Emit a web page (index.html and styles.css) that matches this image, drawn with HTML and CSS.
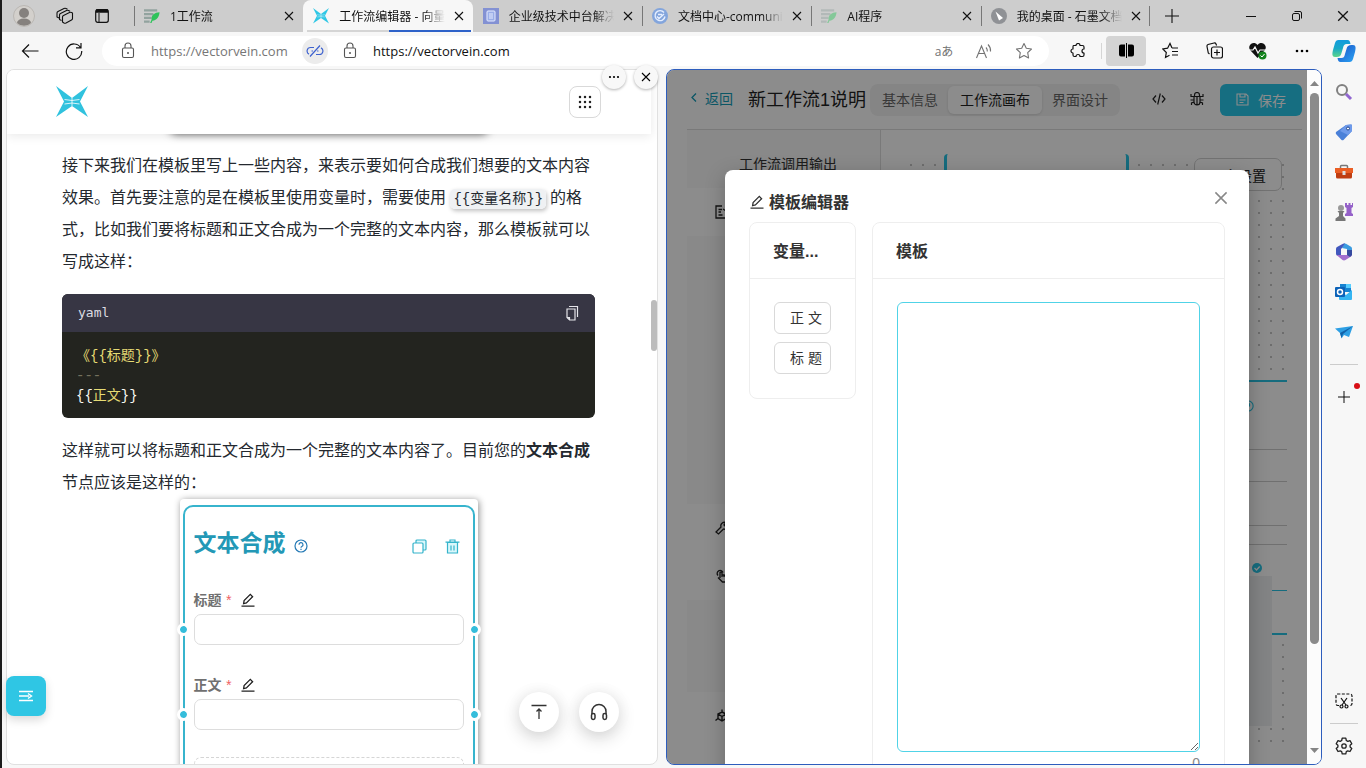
FILE: index.html
```html
<!DOCTYPE html>
<html lang="zh-CN">
<head>
<meta charset="utf-8">
<meta name="viewport" content="width=device-width, initial-scale=1">
<title>工作流编辑器 - 向量脉络</title>
<link rel="stylesheet" href="styles.css">
</head>
<body>
<svg class="defs" aria-hidden="true">
  <defs>
    <symbol id="x" viewBox="0 0 10 10"><path d="M1 1l8 8M9 1l-8 8" fill="none" stroke="currentColor" stroke-width="1.1"/></symbol>
    <symbol id="edit" viewBox="0 0 14 14"><path d="M2.6 10.6l.5-3 6.2-6.2 2.3 2.3-6.2 6.3zM.5 13.2h13" fill="none" stroke="currentColor" stroke-width="1.3"/></symbol>
    <symbol id="lock" viewBox="0 0 14 18"><rect x="1.5" y="6" width="11" height="9.5" rx="1.5" fill="none" stroke="currentColor" stroke-width="1.1"/><path d="M4 6V4a3 3 0 0 1 6 0v2" fill="none" stroke="currentColor" stroke-width="1.1"/><circle cx="7" cy="11" r="1" fill="currentColor"/></symbol>
    <symbol id="bird" viewBox="0 0 32 32"><path d="M0 0l16 12v8L0 31l8-15.500zM32 0L16 12v8l16 11-8-15.500z" fill="currentColor"/><path d="M8.500 13.500l7.500 1 7.500-1M8.500 18l7.500-1 7.500 1M16 12v8" fill="none" stroke="#fff" stroke-width=".8"/></symbol>
    <symbol id="leaf" viewBox="0 0 17 16"><path d="M0 2h14M0 6h10M0 10h8M0 14h6" stroke="#92a39f" stroke-width="2.200"/><path d="M16.500 4c-5 0-9 3-8.500 8l-1.500 3.500h1.500l1-2.500c5-.5 7-4 7.500-9z" fill="#2fc35b"/></symbol>
    <symbol id="star" viewBox="0 0 18 18"><path d="M9 1.500l2.300 4.800 5.200.7-3.800 3.700.9 5.300L9 13.500 4.400 16l.9-5.300L1.500 7l5.200-.7z" fill="none" stroke="currentColor" stroke-width="1.1" stroke-linejoin="round"/></symbol>
    <symbol id="plus" viewBox="0 0 14 14"><path d="M7 0v14M0 7h14" stroke="currentColor" stroke-width="1.100"/></symbol>
  </defs>
</svg>

<div class="window">
  <header class="tabbar">
    <div class="tab-tools">
      <button class="icon-btn" aria-label="用户"><svg width="22" height="22" viewBox="0 0 22 22"><circle cx="11" cy="11" r="10.500" fill="#d3d0cc" stroke="#bab7b3"/><circle cx="11" cy="8" r="5" fill="#85817e"/><path d="M4 18a7 4.500 0 0 1 14 0 10 10 0 0 1-14 0z" fill="#85817e"/></svg></button>
      <button class="icon-btn" aria-label="工作区"><svg width="18" height="18" viewBox="0 0 18 18" fill="#cdcdcd" stroke="#111" stroke-width="1.100" stroke-linejoin="round"><path d="M3 11l-2-1V6q0-1 1-1.500l6-3q1-.5 2 0l1.500.8"/><path d="M5.500 13.500l-2-1V8q0-1 1-1.500l6-3q1-.5 2 0l1.500.8"/><path d="M6.500 10q0-1 1-1.500l6-3q1-.4 2 0l1 .5v5.500q0 1-1 1.500l-5.500 3q-1 .4-2 0l-1.500-1z"/></svg></button>
      <button class="icon-btn" aria-label="标签页操作"><svg width="14" height="14" viewBox="0 0 14 14"><rect x=".7" y=".7" width="12.600" height="12.600" rx="2" fill="none" stroke="#111" stroke-width="1.200"/><path d="M1 2.500h12M1 1.500h12" stroke="#111" stroke-width="2.500"/><path d="M4 4v9" stroke="#111"/></svg></button>
    </div>
    <nav class="tabs">
      <div class="tab ruled"><svg class="fav"><use href="#leaf"/></svg><button class="tab-title">1工作流</button><button class="tab-x" aria-label="关闭"><svg><use href="#x"/></svg></button></div>
      <div class="tab active"><svg class="fav cyan"><use href="#bird"/></svg><button class="tab-title">工作流编辑器 - 向量脉络</button><button class="tab-x" aria-label="关闭"><svg><use href="#x"/></svg></button></div>
      <div class="tab"><svg class="fav" viewBox="0 0 16 16"><path d="M0 0h16v16H0z" fill="#8391d3"/><rect x="4" y="3" width="8" height="10" rx="1" fill="#9baee8" stroke="#e7ecff"/><path d="M6 6h4M6 8h4M6 10h4" stroke="#e7ecff"/></svg><button class="tab-title">企业级技术中台解决方案</button><button class="tab-x" aria-label="关闭"><svg><use href="#x"/></svg></button></div>
      <div class="tab ruled"><svg class="fav" viewBox="0 0 16 16"><circle cx="8" cy="8" r="8" fill="#83a5dc"/><path d="M12 4.500a5 5 0 1 0 1 4M5 8.500l2 2L12 6M6 6.500h4" fill="none" stroke="#e6efff" stroke-width="1.400"/></svg><button class="tab-title">文档中心-community</button><button class="tab-x" aria-label="关闭"><svg><use href="#x"/></svg></button></div>
      <div class="tab ruled"><svg class="fav faded"><use href="#leaf"/></svg><button class="tab-title">AI程序</button><button class="tab-x" aria-label="关闭"><svg><use href="#x"/></svg></button></div>
      <div class="tab ruled"><svg class="fav" viewBox="0 0 16 16"><circle cx="8" cy="8" r="8" fill="#8f9195"/><path d="M4.500 3.500l7.500 6.500-4 2.500z" fill="#fff"/></svg><button class="tab-title">我的桌面 - 石墨文档</button><button class="tab-x" aria-label="关闭"><svg><use href="#x"/></svg></button></div>
    </nav>
    <button class="icon-btn new-tab" aria-label="新标签页"><svg width="14" height="14"><use href="#plus"/></svg></button>
    <div class="win-btns">
      <button class="icon-btn" aria-label="最小化"><svg width="10" height="10"><path d="M0 5.500h10" stroke="#111"/></svg></button>
      <button class="icon-btn" aria-label="还原"><svg width="10" height="10" viewBox="0 0 10 10" fill="none" stroke="#111"><rect x=".5" y="2.500" width="7" height="7" rx="1.500"/><path d="M2.500.5H8A1.500 1.500 0 0 1 9.500 2v5.500"/></svg></button>
      <button class="icon-btn" aria-label="关闭窗口"><svg width="12" height="12"><use href="#x"/></svg></button>
    </div>
  </header>

  <div class="toolbar">
    <button class="icon-btn" aria-label="后退"><svg width="18" height="16" viewBox="0 0 18 16" fill="none" stroke="#111" stroke-width="1.200"><path d="M1.500 8h16M8 1.500L1.500 8 8 14.500"/></svg></button>
    <button class="icon-btn" aria-label="刷新"><svg width="18" height="18" viewBox="0 0 18 18" fill="none" stroke="#111" stroke-width="1.200"><path d="M15.500 5.500A7.700 7.700 0 1 0 16.700 9M16 1v4.800h-5"/></svg></button>
    <div class="urlbar">
      <svg class="lock"><use href="#lock"/></svg>
      <input class="url muted" aria-label="左侧地址" value="https://vectorvein.com">
      <button class="unlink" aria-label="取消链接"><svg width="18" height="14" viewBox="0 0 18 14" fill="none" stroke="#3e62cf" stroke-width="1.200"><path d="M8 3.500H4.500a3.500 3.500 0 0 0-1.500 6.600M10 10.500h3.500a3.500 3.500 0 0 0 1.500-6.600M4 12.500L14 1.500M5.500 7h1.500M11 7h1.500"/></svg></button>
      <svg class="lock"><use href="#lock"/></svg>
      <input class="url" aria-label="右侧地址" value="https://vectorvein.com">
      <span class="grow"></span>
      <button class="icon-btn gray translate" aria-label="翻译">aあ</button>
      <button class="icon-btn gray" aria-label="朗读"><svg width="18" height="16" viewBox="0 0 18 16" fill="none" stroke="currentColor" stroke-width="1.100"><path d="M1.500 15L6.500 3l5 12M3.500 10.500h6M11 4.500q1.500 1.500 1.300 4M13 1.500q3 3 2.500 7"/></svg></button>
      <button class="icon-btn gray" aria-label="收藏"><svg width="18" height="18"><use href="#star"/></svg></button>
    </div>
    <div class="actions">
      <button class="icon-btn ext" aria-label="扩展"><svg width="16" height="16" viewBox="0 0 16 16" fill="none" stroke="#111" stroke-width="1.200" stroke-linejoin="round"><path d="M3.500 2.500H6a2 2 0 0 1 4 0h2.500q1.500 0 1.500 1.500v2a2 2 0 0 0 0 4v2q0 1.500-1.500 1.500H10a2 2 0 0 0-4 0H4.500Q3 13.500 3 12v-2a2 2 0 1 1 0-4V4q0-1.500.5-1.500z"/></svg></button>
      <button class="icon-btn split" aria-label="分屏"><svg width="15" height="15" viewBox="0 0 15 15"><path d="M2 1.500h4v12H2a2 2 0 0 1-2-2v-8a2 2 0 0 1 2-2zM9 1.500h4a2 2 0 0 1 2 2v8a2 2 0 0 1-2 2H9zM7 0h1v15H7z"/></svg></button>
      <button class="icon-btn" aria-label="收藏夹"><svg width="17" height="17" viewBox="0 0 17 17" fill="none" stroke="#111" stroke-width="1.200"><path d="M10 6L8 1.500 5.600 6.200.8 7l3.500 3.500-.8 5 4-2.200M10 6h6M10 9.500h6M10 13h6"/></svg></button>
      <button class="icon-btn" aria-label="集锦"><svg width="17" height="17" viewBox="0 0 17 17" fill="none" stroke="#111" stroke-width="1.200"><path d="M3.500 12L2.300 11 1 4.500q-.3-1.500 1-2L8 1q1.500-.3 2 1l.6 1.500"/><rect x="5.500" y="5" width="11" height="11" rx="2"/><path d="M11 7.500v6M8 10.500h6"/></svg></button>
      <button class="icon-btn" aria-label="浏览器概要"><svg width="18" height="18" viewBox="0 0 18 18"><path d="M8.500 16L1 8a4.200 4.200 0 0 1 7.500-5A4.200 4.200 0 0 1 16 8z" fill="#111"/><path d="M0 8h4l2-3 3 6 2-3h6" stroke="#f7f7f7" stroke-width="1.200" fill="none"/><circle cx="13.500" cy="13.500" r="4" fill="#13831d"/><path d="M11.500 13.500l1.500 1.500 2.500-3" stroke="#fff" fill="none"/></svg></button>
      <button class="icon-btn" aria-label="更多"><svg width="14" height="4"><circle cx="2" cy="2" r="1.300"/><circle cx="7" cy="2" r="1.300"/><circle cx="12" cy="2" r="1.300"/></svg></button>
      <button class="icon-btn" aria-label="Copilot"><svg width="24" height="24" viewBox="0 0 24 24"><defs><linearGradient id="g1" x2="0" y2="1"><stop stop-color="#129bde"/><stop offset=".5" stop-color="#19a9c7"/><stop offset="1" stop-color="#5cd68b"/></linearGradient><linearGradient id="g2" y2="1"><stop stop-color="#1c4fc6"/><stop offset="1" stop-color="#2aa5f4"/></linearGradient></defs><path d="M6.500 1h9c2 0 2.500 1.500 3 4h-4c-2 0-2.800 1-3.500 4l-1.500 5c-.8 3-2 4-5 4H3C0 18 0 15 1 11l2-7c.7-2 1.500-3 3.500-3z" fill="url(#g1)"/><path d="M17.500 23h-9c-2 0-2.500-1.500-3-4h4c2 0 2.800-1 3.500-4l1.500-5c.8-3 2-4 5-4H21c3 0 3 3 2 7l-2 7c-.7 2-1.500 3-3.500 3z" fill="url(#g2)"/></svg></button>
    </div>
  </div>

  <div class="workspace">
    <section class="pane left">
      <div class="pane-tools">
        <button aria-label="更多选项"><svg width="12" height="4"><circle cx="2" cy="2" r="1.100"/><circle cx="6" cy="2" r="1.100"/><circle cx="10" cy="2" r="1.100"/></svg></button>
        <button aria-label="关闭分屏"><svg width="10" height="10"><use href="#x"/></svg></button>
      </div>
      <div class="doc">
        <header class="doc-head">
          <svg class="logo"><use href="#bird"/></svg>
          <button class="grid-btn" aria-label="菜单"><svg width="14" height="14" viewBox="0 0 14 14"><path d="M2 2h.01M7 2h.01M12 2h.01M2 7h.01M7 7h.01M12 7h.01M2 12h.01M7 12h.01M12 12h.01" stroke="#222" stroke-width="2.500" stroke-linecap="round"/></svg></button>
        </header>
        <article class="article">
          <div class="prev-figure"></div>
          <p>接下来我们在模板里写上一些内容，来表示要如何合成我们想要的文本内容效果。首先要注意的是在模板里使用变量时，需要使用 <code>{{变量名称}}</code>的格式，比如我们要将标题和正文合成为一个完整的文本内容，那么模板就可以写成这样：</p>
          <div class="code">
            <div class="code-head"><span>yaml</span><button class="icon-btn copy" aria-label="复制"><svg width="14" height="16" viewBox="0 0 14 16" fill="none" stroke="#e5e5ea" stroke-width="1.200"><path d="M4 1.500h8.500v10.500"/><path d="M2 4h8v11H4.500L2 12.500zM2 12.500h2.500V15"/></svg></button></div>
            <pre><span class="y">《{{标题}}》</span>
<span class="c">---</span>
{{<span class="y">正文</span>}}</pre>
          </div>
          <p>这样就可以将标题和正文合成为一个完整的文本内容了。目前您的<b>文本合成</b>节点应该是这样的：</p>
          <figure class="figure">
            <div class="node">
              <div class="node-head"><h3>文本合成</h3><svg width="14" height="14" viewBox="0 0 14 14" fill="none" stroke="#2479b5" stroke-width="1.200"><circle cx="7" cy="7" r="6"/><path d="M5 5.800a2 2 0 1 1 2.800 1.700Q7 7.900 7 8.700M7 9.800v1.200"/></svg><span class="grow"></span><svg width="15" height="15" viewBox="0 0 15 15" fill="#d9f7fb" stroke="#35b4cb" stroke-width="1.200"><rect x="4" y="1" width="10" height="10" rx="1"/><rect x="1" y="4" width="10" height="10" rx="1" fill="#fff"/></svg><svg width="15" height="15" viewBox="0 0 15 15" fill="none" stroke="#35b4cb" stroke-width="1.200"><path d="M2.500 3.500h10V14h-10z" fill="#d9f7fb"/><path d="M.5 3.200h14M5 3V1h5v2M6 6.500v5M9 6.500v5"/></svg></div>
              <div class="field"><label for="f1">标题 <i>*</i><svg width="14" height="14"><use href="#edit"/></svg></label><div class="port"><input id="f1"></div></div>
              <div class="field"><label for="f2">正文 <i>*</i><svg width="14" height="14"><use href="#edit"/></svg></label><div class="port"><input id="f2"></div></div>
              <div class="dashed"></div>
            </div>
          </figure>
        </article>
      </div>
      <div class="thin-thumb"></div>
      <button class="side-fab" aria-label="展开目录"><svg width="14" height="12" viewBox="0 0 14 12" fill="none" stroke="#fff" stroke-width="1.400"><path d="M0 1.500h14M0 6h10M0 10.500h14M9 3.500L12.500 6 9 8.500"/></svg></button>
      <div class="fabs">
        <button aria-label="回到顶部"><svg width="16" height="16" viewBox="0 0 16 16" fill="none" stroke="#333" stroke-width="1.300"><path d="M.5 1.500h15M8 15V6M5.500 7.500L8 5l2.500 2.500"/></svg></button>
        <button aria-label="客服"><svg width="18" height="18" viewBox="0 0 18 18" fill="none" stroke="#333" stroke-width="1.500"><path d="M2 11V8.500a7 7 0 0 1 14 0V11"/><rect x="1.500" y="10.500" width="3.500" height="6" rx="1.700"/><rect x="13" y="10.500" width="3.500" height="6" rx="1.700"/></svg></button>
      </div>
    </section>

    <section class="pane right">
      <div class="app">
        <header class="app-head">
          <a href="#back" class="back"><svg width="6" height="9" viewBox="0 0 6 9"><path d="M5 .5L1 4.500l4 4" fill="none" stroke="currentColor" stroke-width="1.300"/></svg>返回</a>
          <h1>新工作流1说明</h1>
          <div class="segmented"><button>基本信息</button><button class="on">工作流画布</button><button>界面设计</button></div>
          <span class="grow"></span>
          <button class="icon-btn" aria-label="代码"><svg width="14" height="14" viewBox="0 0 14 14" fill="none" stroke="#222" stroke-width="1.200"><path d="M4 3.500L1 7l3 3.500M10 3.500L13 7l-3 3.500M8.300 1.500L5.700 12.500"/></svg></button>
          <button class="icon-btn" aria-label="调试"><svg width="14" height="14" viewBox="0 0 14 14" fill="none" stroke="#222" stroke-width="1.200"><path d="M4 4.500h6V10a3 3 0 0 1-6 0zM4.500 4V3a2.500 2.500 0 0 1 5 0v1M7 5v8M1 2v2.500h12V2M.5 8H4M10 8h3.500M1.500 13v-2L4 10M12.500 13v-2L10 10"/></svg></button>
          <button class="save"><svg width="13" height="13" viewBox="0 0 13 13" fill="none" stroke="#fff" stroke-width="1.100"><path d="M1 1h9l2 2v9H1zM4 1v3h5V1M3.500 7h6M3.500 9.500h4"/></svg>保存</button>
        </header>
        <div class="app-body">
          <aside class="nodes">
            <div class="group first">工作流调用输出</div>
            <div class="item"><svg width="14" height="14" viewBox="0 0 14 14"><path d="M7 1H1v12h12V8M3.500 4.500H7M3.500 7H6M3.500 10h4M8 4l3 2" fill="none" stroke="#222" stroke-width="1.300"/></svg></div>
            <div class="group tall"></div>
            <div class="item"><svg width="14" height="14" viewBox="0 0 14 14"><path d="M1 11l5-5c-1-3 2-5.500 5-4.500L9 4l1.500 1.500L13 3.500c1 3-2 5.500-4.500 4.500l-5 5z" fill="none" stroke="#222" stroke-width="1.300"/></svg></div>
            <div class="item"><svg width="14" height="14" viewBox="0 0 14 14"><path d="M3 6.500a3 3 0 1 1 5-3M5 9V3.500q1-1 2 0V8M7 6h2v2M9 6.500h2V8M11 7h2v3a3 3 0 0 1-3 3H7.500L3 8.500" fill="none" stroke="#222" stroke-width="1.300"/></svg></div>
            <div class="group mid"></div>
            <div class="item"><svg width="14" height="14" viewBox="0 0 14 14"><path d="M7 3l4 2v4.500L7 12 3 9.500V5zM3 5l4 2.500L11 5M7 7.500V12M7 3V.5M3 9.500L.5 11.500M11 9.500l2.500 2" fill="none" stroke="#222" stroke-width="1.400"/></svg></div>
          </aside>
          <div class="canvas">
            <div class="cnode top"></div>
            <button class="more-set">更多设置</button>
            <div class="cnode main"><svg class="q" width="12" height="12" viewBox="0 0 14 14" fill="none" stroke="#28c5e5" stroke-width="1.300"><circle cx="7" cy="7" r="6"/><path d="M5 5.800a2 2 0 1 1 2.800 1.700Q7 7.900 7 8.700"/></svg>
              <hr class="l1"><hr class="l2"><hr class="l3"><hr class="l4"><hr class="l5">
              <svg class="ok" width="10" height="10" viewBox="0 0 10 10"><circle cx="5" cy="5" r="5" fill="#28c5e5"/><path d="M2.500 5l2 2 3.200-3.500" fill="none" stroke="#fff" stroke-width="1.300"/></svg>
            </div>
            <div class="minimap"></div>
          </div>
        </div>
        <div class="mask"></div>
        <div class="modal" role="dialog" aria-labelledby="mt">
          <div class="modal-head"><svg width="14" height="14"><use href="#edit"/></svg><h2 id="mt">模板编辑器</h2><button class="icon-btn close" aria-label="关闭"><svg width="14" height="14"><use href="#x"/></svg></button></div>
          <div class="cards">
            <div class="card vars"><h4>变量...</h4><div class="card-body"><button>正 文</button><button>标 题</button></div></div>
            <div class="card tpl"><h4><label for="tpl">模板</label></h4><div class="card-body"><textarea id="tpl"></textarea><span class="count">0</span></div></div>
          </div>
        </div>
      </div>
      <div class="scroll"><svg width="9" height="5"><path d="M0 5l4.500-5L9 5z" fill="#858585"/></svg><div class="track"><div class="thumb"></div></div><svg width="9" height="5"><path d="M0 0l4.500 5L9 0z" fill="#858585"/></svg></div>
    </section>

    <aside class="edge">
      <button class="icon-btn" aria-label="搜索"><svg width="18" height="18" viewBox="0 0 18 18" fill="none"><circle cx="7" cy="7" r="5" stroke="#808080" stroke-width="2"/><path d="M11 11l5 5" stroke="#9166d0" stroke-width="3"/></svg></button>
      <button class="icon-btn" aria-label="购物"><svg width="18" height="18" viewBox="0 0 18 18"><path d="M11 2l5-.5q1 0 1 1V8l-8.500 9q-1 .5-2 0L1 11q-.5-1 0-2z" fill="#4a80d8"/><path d="M11 2l5-.5q1 0 1 1V8l-4 4-8-4z" fill="#6e9aea"/><circle cx="13" cy="5.500" r="1.500" fill="#fff" stroke="#20468f"/></svg></button>
      <button class="icon-btn" aria-label="工具"><svg width="18" height="16" viewBox="0 0 18 16"><path d="M5.500 5V2.500q0-1 1-1h5q1 0 1 1V5" fill="none" stroke="#777" stroke-width="1.500"/><path d="M0 4h18v5H0z" fill="#ea5e24"/><path d="M1 9h16v4q0 1.500-1.500 1.500h-13Q1 14.500 1 13z" fill="#bf3d11"/><rect x="7.500" y="7" width="3" height="4" fill="#ddd"/></svg></button>
      <button class="icon-btn" aria-label="游戏"><svg width="18" height="18" viewBox="0 0 18 18"><path d="M10 0h2v2h1.500V0h2v2H17V0h1v4l-1.500 1v5l1.500 1v2h-8v-2l1.500-1V5L10 4z" fill="#9561c9"/><circle cx="6" cy="5" r="3" fill="#999"/><path d="M2.500 8h7L8 10v3l2.500 2.500V18h-10v-2.500L4 13v-3z" fill="#777"/></svg></button>
      <button class="icon-btn" aria-label="Microsoft 365"><svg width="18" height="18" viewBox="0 0 18 18"><path d="M9 .5q1-.3 2 .3l5 3q1 .7 1 2V11l-5-2.500V6L7 5z" fill="#3a9be0"/><path d="M10 .3L7 5 6 6v7l-4-.5q-1-.7-1-2V6q0-1.300 1-2L8 .8z" fill="#4157bd"/><path d="M1.500 12L6 12h6l5-2v1.500q0 1.300-1 2l-5.500 3.500q-1.500.8-3 0z" fill="#a26dce"/><path d="M17 7v5l-2 2-3-2V7z" fill="#354a9f"/><circle cx="9" cy="9" r="2.800" fill="#f7f7f7"/></svg></button>
      <button class="icon-btn" aria-label="Outlook"><svg width="18" height="18" viewBox="0 0 18 18"><path d="M5 1h11v8H5z" fill="#1683d1"/><path d="M11 1h5v4h-5z" fill="#56ceff"/><path d="M4 8l7 4 6-5v9q0 1-1 1H5q-1 0-1-1z" fill="#35b5f2"/><rect y="4" width="10" height="10" rx="1" fill="#0c62b8"/><circle cx="5" cy="9" r="2.500" fill="none" stroke="#fff" stroke-width="1.500"/></svg></button>
      <button class="icon-btn" aria-label="投放"><svg width="18" height="14" viewBox="0 0 18 14"><path d="M0 3.500L18 1l-4 11-5-2-2.500 3.500L5 8z" fill="#2d9fe4"/><path d="M18 1L5 8l1.500 5L8 9z" fill="#1262a9"/></svg></button>
      <hr>
      <button class="icon-btn add" aria-label="自定义"><svg width="12" height="12"><use href="#plus"/></svg><i></i></button>
      <span class="grow"></span>
      <button class="icon-btn" aria-label="截图"><svg width="18" height="16" viewBox="0 0 18 16" fill="none" stroke="#111" stroke-width="1.200"><path d="M4 12.500H3q-2 0-2-2V3q0-2 2-2h12q2 0 2 2v7.500q0 2-2 2h-1" stroke-dasharray="3 1.500"/><path d="M6 5l5 7M12 5l-5 7"/><circle cx="6.500" cy="13.500" r="1.500"/><circle cx="11.500" cy="13.500" r="1.500"/></svg></button>
      <hr class="bottom">
      <button class="icon-btn" aria-label="设置"><svg width="18" height="18" viewBox="0 0 18 18" fill="none" stroke="#222" stroke-width="1.300" stroke-linejoin="round"><path d="M7.200 1.200h3.600l.5 2.300 1.500.9 2.200-.8 1.800 3.200-1.700 1.500v1.600l1.700 1.500-1.800 3.100-2.200-.7-1.500.8-.5 2.300H7.200l-.5-2.300-1.500-.8-2.200.7-1.800-3.100 1.700-1.500V8.300L1.200 6.800 3 3.600l2.200.8 1.500-.9z"/><circle cx="9" cy="9" r="2.200"/></svg></button>
    </aside>
  </div>
</div>
</body>
</html>
```
FILE: styles.css
```css
* { box-sizing: border-box; }
:root { --sans: "Open Sans", "Noto Sans CJK SC", sans-serif; --page: "Liberation Sans", "Noto Sans CJK SC", sans-serif; }
body { margin: 0; background: #1c1c1c; font-family: var(--page); overflow: hidden; }
button, input, textarea { font: inherit; color: inherit; margin: 0; padding: 0; border: 0; background: none; }
h1, h2, h3, h4, p, figure, pre, hr { margin: 0; }
svg { display: block; flex: none; }
.defs { position: absolute; width: 0; height: 0; }
.grow { flex: 1; }
.icon-btn { display: flex; align-items: center; justify-content: center; }
.window { margin-left: 2px; height: 100vh; display: flex; flex-direction: column; background: #f7f7f7; }

.tabbar { flex: none; display: flex; height: 32px; background: #cdcdcd; font: 12px var(--sans); color: #111; }
.tab-tools { display: flex; width: 132px; padding-left: 11px; gap: 21px; align-items: center; }
.tabs { display: flex; flex: 0 1 1016px; min-width: 0; }
.tab { flex: 1; min-width: 0; display: flex; align-items: center; padding: 0 9px 0 10px; position: relative; }
.tab.ruled::before { content: ""; position: absolute; left: 0; top: 6px; width: 1px; height: 20px; background: #777; }
.tabs .ruled:last-child::after { content: ""; position: absolute; right: 0; top: 6px; width: 1px; height: 20px; background: #777; }
.tab.active { background: #f7f7f7; border-radius: 8px 8px 0 0; }
.tab.active::after { content: ""; position: absolute; left: 4px; right: 2px; bottom: 0; height: 2px; background: linear-gradient(90deg, #d5d5d5 50%, #2e62c9 50%); }
.fav { width: 16px; height: 16px; margin-right: 10px; }
.fav.cyan { color: #2fc7e5; }
.fav.faded { opacity: .45; }
.tab-title { flex: 1; min-width: 0; height: 24px; overflow: hidden; white-space: nowrap; text-align: left; -webkit-mask-image: linear-gradient(90deg, #000 80%, transparent); mask-image: linear-gradient(90deg, #000 80%, transparent); }
.tab-x { width: 20px; height: 20px; padding: 5px; margin-left: 4px; margin-right: -5px; }
.tab-x svg { width: 10px; height: 10px; }
.new-tab { width: 44px; }
.win-btns { margin-left: auto; display: flex; }
.win-btns button { width: 46px; }

.toolbar { flex: none; display: flex; align-items: center; height: 37px; padding: 0 2px 0 6px; font: 14px var(--sans); color: #111; }
.toolbar > .icon-btn { width: 44px; height: 30px; }
.urlbar { flex: 1; min-width: 0; display: flex; align-items: center; height: 30px; margin-left: 6px; padding: 0 5px 0 19px; border-radius: 15px; background: #fff; }
.lock { width: 14px; height: 18px; margin-right: 16px; color: #555; }
.url { width: 151px; height: 28px; font-size: 13px; }
.url.muted { color: #767676; }
.unlink { width: 26px; height: 26px; margin-right: 15px; border-radius: 50%; background: #ececec; display: flex; align-items: center; justify-content: center; }
.urlbar .gray { width: 40px; color: #737373; }
.urlbar .translate { font-size: 12px; }
.actions { display: flex; align-items: center; padding-left: 6px; }
.actions .icon-btn { width: 44px; height: 30px; }
.actions .icon-btn.ext { width: 47px; height: 16px; border-right: 1px solid #d5d5d5; }
.actions .icon-btn.split { width: 40px; background: #d4d4d4; border-radius: 4px; margin: 0 2px 0 4px; }
.actions .icon-btn:last-child { width: 40px; }

.workspace { flex: 1; min-height: 0; display: grid; grid-template-columns: minmax(0, 652fr) 8px minmax(0, 656fr) 44px; padding: 0 0 0 4px; }
.pane { position: relative; min-width: 0; margin-bottom: 3px; border-radius: 8px; background: #fff; }
.left { border: 1px solid #e0e0e0; }
.pane-tools { position: absolute; z-index: 5; top: -5px; right: -1px; display: flex; gap: 8px; }
.pane-tools button { width: 24px; height: 24px; border-radius: 50%; background: #f8f8f8; box-shadow: 0 1px 3px rgba(0,0,0,.3); display: flex; align-items: center; justify-content: center; }
.doc { position: absolute; inset: 0; overflow: hidden; border-radius: 7px; padding-right: 6px; }
.doc-head { position: relative; z-index: 2; height: 64px; padding: 0 50px 0 49px; display: flex; align-items: center; justify-content: space-between; background: #fff; box-shadow: 0 2px 10px rgba(0,0,0,.09); }
.logo { width: 32px; height: 32px; color: #30c2de; }
.grid-btn { width: 32px; height: 32px; border: 1px solid #d9d9d9; border-radius: 8px; display: flex; align-items: center; justify-content: center; }
.article { padding: 0 56px 0 55px; font-size: 16px; line-height: 32px; color: #24292f; }
.prev-figure { width: 318px; height: 15px; margin: -15px auto 16px; border-radius: 6px; background: #fff; box-shadow: 0 0 8px rgba(0,0,0,.65); }
.article code { margin-right: 4px; padding: 2px 3px; font: 14px/17px "Liberation Mono", "Noto Sans CJK SC", monospace; border-radius: 5px; background: #eff1f3; box-shadow: 1px 2px 4px rgba(0,0,0,.25); }
.code { margin: 16px 0 17px; border-radius: 6px; overflow: hidden; background: #23241f; font-family: "DejaVu Sans Mono", "Noto Sans CJK SC", monospace; }
.code-head { height: 38px; padding: 0 16px; display: flex; justify-content: space-between; align-items: center; background: #373644; color: #dcdce2; font-size: 13px; line-height: 36px; }
.code pre { padding: 14px 14px 12px; font: 14px/20px "Liberation Mono", "Noto Sans CJK SC", monospace; color: #f8f8f2; }
.y { color: #e6db74; }
.c { color: #75715e; }
.figure { width: 298px; margin: 0 auto; padding: 6px 3px 0; border-radius: 4px; box-shadow: 1px 1px 7px rgba(0,0,0,.45); background: #fff; }
.node { height: 400px; padding: 18px 9px; border: 2px solid #37b4cd; border-radius: 10px; color: #707070; }
.node-head { display: flex; align-items: center; gap: 8px; height: 36px; padding-right: 4px; }
.node-head h3 { font-size: 23px; line-height: 36px; font-weight: 700; color: #2398b6; }
.node-head svg { position: relative; top: 3px; }
.node-head svg + svg { margin-left: 10px; }
.field label { display: flex; align-items: center; height: 29px; margin-top: 24px; font-size: 14px; font-weight: 700; }
.field + .field label { margin-top: 25px; }
.field i { margin: 0 10px 0 4px; font-weight: 400; color: #ef6262; }
.field label svg { color: #222; }
.port { position: relative; }
.port::before, .port::after { content: ""; position: absolute; top: 9px; width: 7px; height: 7px; border: 3px solid #fff; border-radius: 50%; background: #35bddb; background-clip: padding-box; }
.port::before { left: -17px; }
.port::after { right: -17px; }
.port input { display: block; width: 100%; height: 31px; border: 1px solid #ddd; border-radius: 7px; }
.dashed { height: 80px; margin-top: 27px; border: 1px dashed #d5d5d5; border-radius: 7px; }
.thin-thumb { position: absolute; top: 230px; right: 0; width: 6px; height: 51px; border-radius: 3px; background: #bcbcbc; }
.side-fab { position: absolute; left: -1px; bottom: 48px; width: 40px; height: 40px; border-radius: 8px; background: #2fc6e4; display: flex; align-items: center; justify-content: center; box-shadow: 0 4px 10px rgba(0,0,0,.15); }
.fabs { position: absolute; right: 38px; bottom: 32px; display: flex; gap: 20px; }
.fabs button { width: 40px; height: 40px; border-radius: 50%; background: #fff; box-shadow: 0 6px 18px rgba(0,0,0,.16), 0 0 16px rgba(0,0,0,.05); display: flex; align-items: center; justify-content: center; }

.right { grid-column: 3; display: flex; overflow: hidden; border: 1px solid #2d5dbd; }
.app { position: relative; flex: 1; min-width: 0; overflow: hidden; display: flex; flex-direction: column; padding: 0 5px 0 20px; font-size: 14px; color: #333; }
.app-head { flex: none; height: 60px; display: flex; align-items: center; border-bottom: 1px solid #ddd; white-space: nowrap; }
.back { display: flex; align-items: center; gap: 8px; margin: 0 15px 0 4px; padding-bottom: 4px; color: #159db9; text-decoration: none; }
.app-head h1 { font-size: 18px; font-weight: 400; color: #222; margin-right: 4px; padding-bottom: 4px; }
.segmented { display: flex; padding: 2px; border-radius: 8px; background: #f3f3f3; }
.segmented button { height: 28px; padding: 0 10px 2px; color: #666; border-radius: 6px; }
.segmented .on { padding: 0 12px 2px; color: #222; background: #fff; box-shadow: 0 1px 3px rgba(0,0,0,.12); }
.app-head .icon-btn { width: 38px; height: 32px; padding-bottom: 2px; }
.save { display: flex; align-items: center; gap: 9px; height: 32px; margin-left: 4px; padding: 0 16px; border-radius: 6px; background: #28c9ec; color: #fff; }
.app-body { flex: 1; min-height: 0; display: flex; }
.nodes { width: 194px; border-right: 1px solid #ddd; overflow: hidden; }
.group { padding-left: 52px; background: #f9f9f9; }
.group.first { height: 58px; line-height: 68px; }
.group.tall { height: 268px; }
.group.mid { height: 92px; }
.item { display: flex; align-items: center; height: 48px; padding-left: 28px; }
.canvas { position: relative; flex: 1; margin-right: 15px; }
.canvas::before { content: ""; position: absolute; inset: 29px 0 20px 24px; background: radial-gradient(circle, #bbb 0, #ccc 1px, transparent 1px) 0 0 / 12px 12px; }
.cnode { position: absolute; background: #fff; border: 2px solid #28c5e5; }
.cnode.top { left: 63px; right: 158px; top: 24px; height: 40px; border-width: 0 3px; border-radius: 4px; }
.cnode.main { left: 80px; right: 0; top: 250px; height: 255px; border-width: 2px 0; }
.cnode hr { position: absolute; right: 0; width: 60px; border: 0; border-top: 1px solid #ccc; }
.l1 { top: 67px; } .l2 { top: 99px; } .l3 { top: 143px; } .l4 { top: 162px; } .cnode .l5 { top: 208px; border-color: #28c5e5; }
.q { position: absolute; right: 33px; top: 18px; }
.ok { position: absolute; right: 25px; top: 181px; }
.more-set { position: absolute; right: 5px; top: 28px; width: 88px; height: 33px; border: 1px solid #d0d0d0; border-radius: 7px; background: #fff; color: #222; }
.minimap { position: absolute; right: 15px; top: 446px; width: 200px; height: 150px; background: #eff0f3; }
.mask { position: absolute; inset: 0; background: rgba(0,0,0,.45); }
.modal { position: absolute; left: 58px; right: 58px; top: 100px; height: 720px; padding: 16px 24px; border-radius: 8px; background: #fff; box-shadow: 0 6px 20px rgba(0,0,0,.25); }
.modal-head { display: flex; align-items: center; gap: 5px; height: 32px; margin-bottom: 4px; padding-left: 1px; }
.modal-head h2 { flex: 1; padding-bottom: 2px; font-size: 16px; font-weight: 700; color: #333; }
.close { width: 22px; height: 22px; margin-right: -7px; margin-bottom: 8px; color: #888; }
.cards { display: grid; grid-template-columns: 107px minmax(0, 1fr); gap: 16px; align-items: start; }
.card { border: 1px solid #eee; border-radius: 8px; }
.card h4 { height: 56px; padding: 0 23px; border-bottom: 1px solid #eee; font-size: 16px; line-height: 57px; color: #333; }
.card-body { padding: 23px 24px 24px; display: flex; flex-direction: column; gap: 8px; }
.vars button { height: 32px; padding: 0 7px 2px 14px; border: 1px solid #d9d9d9; border-radius: 6px; white-space: nowrap; }
.tpl .card-body { gap: 2px; }
.tpl textarea { height: 450px; border: 1px solid #50d3e7; border-radius: 6px; outline: 0; resize: vertical; }
.count { align-self: flex-end; color: #888; line-height: 18px; }
.scroll { flex: none; width: 14px; padding: 11px 0; display: flex; flex-direction: column; align-items: center; background: #fcfcfc; }
.track { flex: 1; padding: 7px 0; }
.thumb { width: 9px; height: 85%; border-radius: 5px; background: #8b8b8b; }

.edge { grid-column: 4; display: flex; flex-direction: column; align-items: center; padding: 3px 0 2px; }
.edge .icon-btn { flex: none; width: 40px; height: 40px; }
.edge hr { flex: none; width: 28px; border: 0; border-top: 1px solid #ccc; margin: 12px 0; }
.edge hr.bottom { margin: 2px 0; }
.add { position: relative; }
.add i { position: absolute; right: 4px; top: 6px; width: 6px; height: 6px; border-radius: 50%; background: #d80f16; }
```
